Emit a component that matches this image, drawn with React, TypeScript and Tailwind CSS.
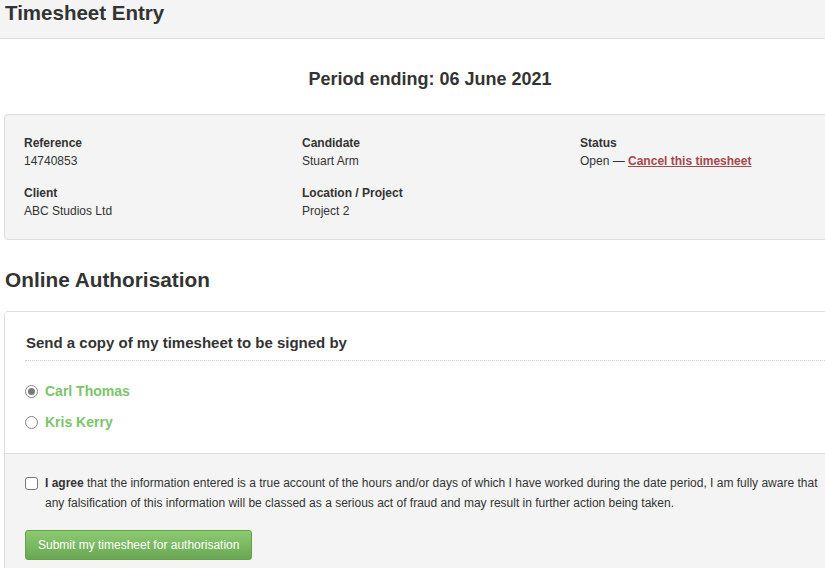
const info = [
  [
    { label: 'Reference', value: '14740853' },
    { label: 'Candidate', value: 'Stuart Arm' },
    { label: 'Status', value: 'status' },
  ],
  [
    { label: 'Client', value: 'ABC Studios Ltd' },
    { label: 'Location / Project', value: 'Project 2' },
  ],
];

const signers = [
  { name: 'Carl Thomas', checked: true },
  { name: 'Kris Kerry', checked: false },
];

export default function App() {
  return (
    <div className="w-[825px] h-[568px] overflow-hidden bg-white text-[#333333] font-['Liberation_Sans',Arial,sans-serif]">
      {/* Header */}
      <div className="w-[880px] h-[39px] bg-[#f4f4f4] border-b border-[#dddddd]">
        <h1 className="pl-[5px] pt-[1px] text-[20.5px] leading-[24px] font-bold">Timesheet Entry</h1>
      </div>

      <div className="w-[852px] ml-[4px]">
        {/* Period */}
        <h2 className="mt-[28px] text-center text-[18px] leading-[24px] font-bold">Period ending: 06 June 2021</h2>

        {/* Info box */}
        <div className="mt-[23px] bg-[#f4f4f4] border border-[#dddddd] rounded-[4px] px-[19px] py-[19px] flex flex-col gap-[14px]">
          {info.map((row, i) => (
            <div key={i} className="flex">
              {row.map((item) => (
                <div key={item.label} className="w-[278px] shrink-0 text-[12px] leading-[18px]">
                  <div className="font-bold">{item.label}</div>
                  {item.value === 'status' ? (
                    <div>
                      Open — <a className="font-bold text-[#a5484c] underline">Cancel this timesheet</a>
                    </div>
                  ) : (
                    <div>{item.value}</div>
                  )}
                </div>
              ))}
            </div>
          ))}
        </div>

        {/* Online Authorisation */}
        <h2 className="mt-[28px] pl-[1px] text-[20.8px] leading-[24px] font-bold">Online Authorisation</h2>

        <div className="mt-[19px] border border-[#dddddd] rounded-[4px] overflow-hidden">
          <div className="bg-white px-[20px] pt-[20px] pb-[21px]">
            <h3 className="text-[15px] leading-[21px] font-bold pl-[1px] pb-[7px] border-b border-dotted border-[#cccccc]">
              Send a copy of my timesheet to be signed by
            </h3>
            <div className="mt-[20px] flex flex-col gap-[11px]">
              {signers.map((s) => (
                <label key={s.name} className="flex items-center gap-[7px] h-[20px]">
                  <span className="w-[13px] h-[13px] rounded-full border border-[#858585] bg-white flex items-center justify-center">
                    {s.checked && <span className="w-[7px] h-[7px] rounded-full bg-[#7a7a7a]" />}
                  </span>
                  <span className="text-[14px] leading-[20px] font-bold text-[#7dc36b]">{s.name}</span>
                </label>
              ))}
            </div>
          </div>

          <div className="bg-[#f4f4f4] border-t border-[#e0e0e0] px-[20px] pt-[19px] pb-[20px]">
            <div className="flex gap-[7px]">
              <span className="mt-[4px] w-[13px] h-[13px] shrink-0 rounded-[3px] border border-[#767676] bg-white" />
              <p className="text-[12px] leading-[20px]">
                <b>I agree</b> that the information entered is a true account of the hours and/or days of which I have worked during the date period, I am fully aware that any falsification of this information will be classed as a serious act of fraud and may result in further action being taken.
              </p>
            </div>
            <button className="mt-[17px] h-[30px] px-[12px] rounded-[3px] border border-[#62a04c] bg-gradient-to-b from-[#8dca72] to-[#68a752] text-white text-[12px] leading-[28px]">
              Submit my timesheet for authorisation
            </button>
          </div>
        </div>
      </div>
    </div>
  );
}
